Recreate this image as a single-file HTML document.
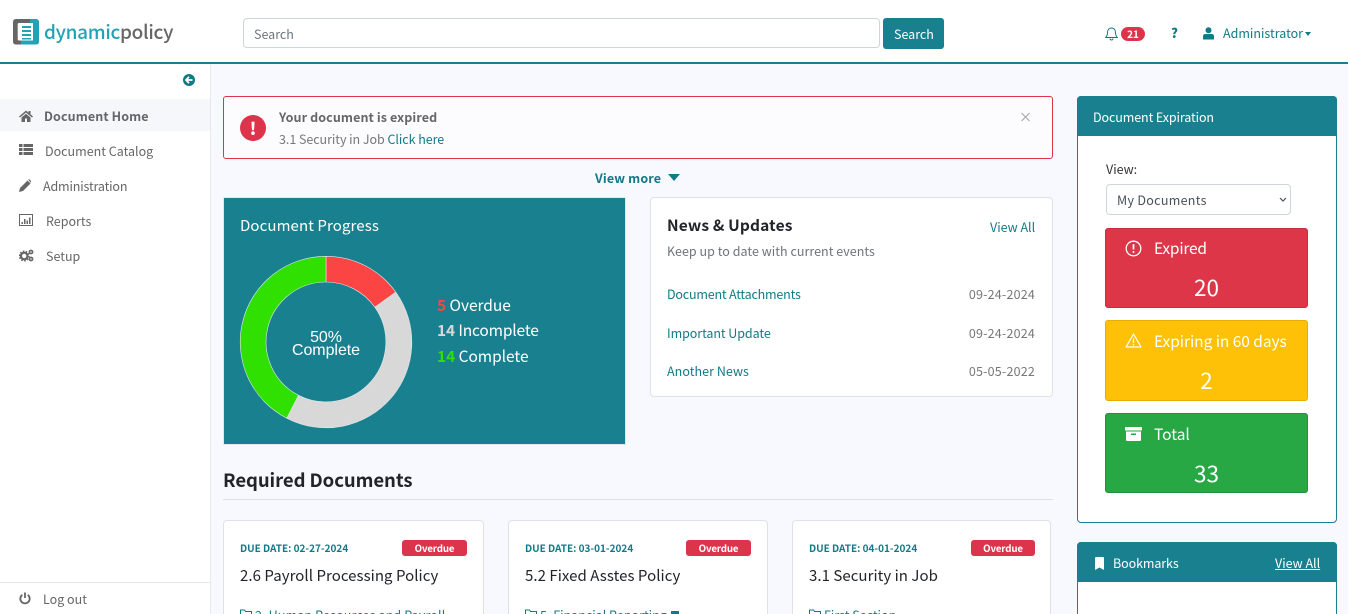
<!DOCTYPE html>
<html><head><meta charset="utf-8"><title>Dynamic Policy</title>
<style>
*{box-sizing:border-box}
html,body{margin:0;padding:0;width:1348px;height:614px;overflow:hidden;background:#f8f9fe}
body{position:relative;font-family:"Noto Sans CJK JP","Liberation Sans",sans-serif;font-size:12.5px;color:#666;letter-spacing:0}
.t{position:absolute;white-space:nowrap;line-height:20px}
.b{position:absolute}
.teal{color:#117a85}
svg{position:absolute;display:block}
.card{position:absolute;background:#fff;border:1px solid #dfe1e8;border-radius:4px}
.tile{position:absolute;left:1105px;width:203px;height:80px;border-radius:3px;color:#fff}
.badge{position:absolute;background:#dc354b;color:#fff;font-size:9.7px;letter-spacing:-.15px;font-weight:700;text-align:center;height:16px;line-height:16px;border-radius:3px;top:540px}
.due{font-size:10px;font-weight:700;color:#117a85;top:538px}
.ttl{font-size:15px;letter-spacing:.05px;color:#212529;top:566px}
</style></head><body>

<div class="b" style="left:0;top:0;width:1348px;height:62px;background:#fff"></div>
<div class="b" style="left:0;top:62px;width:1348px;height:2px;background:#19808f"></div>
<div class="b" style="left:0;top:64px;width:211px;height:550px;background:#fff;border-right:1px solid #e6e8ee"></div>

<svg style="left:13px;top:19px" width="27" height="26" viewBox="0 0 27 26">
<path d="M3 0H17V4H6Q4.700 4 4.700 5.500V20Q4.700 21.500 6 21.500H10V25.500H3Q0 25.500 0 22.500V3Q0 0 3 0Z" fill="#666"/>
<path d="M17 0H23Q26 0 26 3V22.500Q26 25.500 23 25.500H8V21.500H20V4H17Z" fill="#22a3b5"/>
<path d="M9 7H18V9H9ZM9 11H18V13H9ZM9 15H18V17H9ZM9 19H18V20.500H9Z" fill="#22a3b5"/>
</svg>
<div class="t" style="left:44px;top:19px;font-size:19px;line-height:26px;letter-spacing:-.33px;color:#22a3b5;font-weight:500">dynamic<span style="color:#666">policy</span></div>

<div class="b" style="left:243px;top:18px;width:637px;height:30px;background:#fff;border:1px solid #ced4da;border-radius:4px"></div>
<div class="t" style="left:254px;top:24px;color:#6c757d">Search</div>
<div class="b" style="left:883px;top:18px;width:61px;height:31px;background:#19808f;border-radius:3px"></div>
<div class="t" style="left:894px;top:24px;color:#fff">Search</div>

<svg style="left:1105px;top:27px" width="13" height="14" viewBox="0 0 13 14"><path d="M6.500 1C4 1 2.500 3 2.500 5.500C2.500 8.500 1.500 9.500 .7 10.500H12.300C11.500 9.500 10.500 8.500 10.500 5.500C10.500 3 9 1 6.500 1ZM5 11.500C5 13.500 8 13.500 8 11.500" fill="none" stroke="#117a85" stroke-width="1"/></svg>
<div class="b" style="left:1121px;top:27px;width:24px;height:14px;background:#dc354b;border-radius:7px;color:#fff;font-size:10px;font-weight:700;line-height:14px;text-align:center">21</div>
<div class="t" style="left:1171px;top:23px;font-weight:900;color:#117a85;font-size:13px">?</div>
<svg style="left:1203px;top:27px" width="11" height="13" viewBox="0 0 11 13"><circle cx="5.500" cy="3.200" r="3" fill="#117a85"/><path d="M0 12.500V9.500Q0 7 2.500 7H8.500Q11 7 11 9.500V12.500Z" fill="#117a85"/></svg>
<div class="t teal" style="left:1223px;top:23px">Administrator</div>
<div class="b" style="left:1305px;top:32px;border:3.500px solid transparent;border-top:4px solid #117a85;border-bottom:0"></div>

<svg style="left:183px;top:74px" width="12" height="12" viewBox="0 0 12 12"><circle cx="6" cy="6" r="6" fill="#117a85"/><path d="M6 2.800L3 6L6 9.200M3.500 6H9.500" fill="none" stroke="#fff" stroke-width="1.700"/></svg>

<div class="b" style="left:0;top:99px;width:210px;height:32px;background:#f5f7fb"></div>
<svg style="left:19px;top:110px" width="14" height="12" viewBox="0 0 14 12"><path d="M7 .5L0 6.500L1 7.500L7 2.500L13 7.500L14 6.500L11.500 4.300V1H9.500V2.600ZM2.500 7.500V12H6V8.500H8V12H11.500V7.500L7 3.800Z" fill="#666"/></svg>
<div class="t" style="left:44px;top:106px;font-weight:700;color:#666;letter-spacing:.1px">Document Home</div>
<svg style="left:19px;top:144px" width="14" height="11" viewBox="0 0 14 11"><path d="M0 0H3.500V3H0ZM4.500 0H14V3H4.500ZM0 4H3.500V7H0ZM4.500 4H14V7H4.500ZM0 8H3.500V11H0ZM4.500 8H14V11H4.500Z" fill="#666"/></svg>
<div class="t" style="left:45px;top:141px">Document Catalog</div>
<svg style="left:19px;top:179px" width="12" height="13" viewBox="0 0 12 13"><path d="M0 13L1 9L8.500 1.500L11.500 4.500L4 12ZM9.300 .8L10 0L12 2L12 3.500L11.800 3.800Z" fill="#666"/></svg>
<div class="t" style="left:43px;top:176px;letter-spacing:-.15px">Administration</div>
<svg style="left:19px;top:214px" width="14" height="12" viewBox="0 0 14 12"><path d="M.5 .5H13.500V11.500H.5Z" fill="none" stroke="#666"/><path d="M2.500 8H4V10H2.500ZM5 5H6.500V10H5ZM7.500 6.500H9V10H7.500ZM10 3.500H11.500V10H10Z" fill="#666"/></svg>
<div class="t" style="left:46px;top:211px">Reports</div>
<svg style="left:19px;top:249px" width="15" height="13" viewBox="0 0 15 13"><circle cx="5.200" cy="7" r="3.300" fill="none" stroke="#666" stroke-width="2.200"/><circle cx="5.200" cy="7" r="4.800" fill="none" stroke="#666" stroke-width="1.400" stroke-dasharray="1.600 1.400"/><circle cx="12" cy="3" r="1.600" fill="none" stroke="#666" stroke-width="1.600"/><circle cx="12" cy="10" r="1.600" fill="none" stroke="#666" stroke-width="1.600"/></svg>
<div class="t" style="left:46px;top:246px">Setup</div>
<div class="b" style="left:0;top:582px;width:210px;height:1px;background:#e6e8ee"></div>
<svg style="left:19px;top:592px" width="12" height="13" viewBox="0 0 12 13"><path d="M3.300 2.800A4.700 4.700 0 1 0 8.700 2.800" fill="none" stroke="#666" stroke-width="1.800"/><path d="M6 .5V6" stroke="#666" stroke-width="1.800"/></svg>
<div class="t" style="left:43px;top:589px">Log out</div>

<div class="b" style="left:223px;top:96px;width:830px;height:63px;background:#fcfcff;border:1px solid #dc354b;border-radius:3px"></div>
<div class="b" style="left:240px;top:115px;width:26px;height:26px;border-radius:50%;background:#dc354b;color:#fff;font-weight:900;font-size:17px;line-height:26px;text-align:center;letter-spacing:0">!</div>
<div class="t" style="left:279px;top:107px;font-weight:700;color:#666;letter-spacing:.1px">Your document is expired</div>
<div class="t" style="left:279px;top:129px;color:#777;letter-spacing:-.05px">3.1 Security in Job <span class="teal">Click here</span></div>
<svg style="left:1021px;top:112px" width="9" height="10" viewBox="0 0 9 10"><path d="M.5 1L8.500 9M8.500 1L.5 9" stroke="#a9abb0" stroke-width="1.200"/></svg>

<div class="t teal" style="left:595px;top:168px;font-weight:700;letter-spacing:.15px">View more</div>
<div class="b" style="left:668px;top:174px;border:6px solid transparent;border-top:7px solid #117a85;border-bottom:0"></div>

<div class="b" style="left:223px;top:197px;width:403px;height:248px;background:#19808f;border:1px solid #e4e6ec"></div>
<div class="t" style="left:240px;top:216px;color:#fff;font-size:15px;letter-spacing:.1px">Document Progress</div>
<svg style="left:238px;top:254px" width="176" height="176" viewBox="238 254 176 176">
<path d="M326 256.300A85.700 85.700 0 0 1 395.800 292.200L374.800 307.200A60 60 0 0 0 326 282Z" fill="#fb4444" stroke="#dfe8ea" stroke-width=".6"/>
<path d="M395.800 292.200A85.700 85.700 0 0 1 286.700 418.200L298.500 395.300A60 60 0 0 0 374.800 307.200Z" fill="#d8d8d8" stroke="#dfe8ea" stroke-width=".6"/>
<path d="M286.700 418.200A85.700 85.700 0 0 1 326 256.300V282A60 60 0 0 0 298.500 395.300Z" fill="#2fe000" stroke="#dfe8ea" stroke-width=".6"/>
</svg>
<div class="t" style="left:266px;top:331px;width:120px;text-align:center;color:#fff;font-family:'Liberation Sans',sans-serif;font-size:16px;line-height:13px;letter-spacing:-.05px">50%<br>Complete</div>
<div class="t" style="left:437px;top:295px;color:#fff;font-size:15.500px;letter-spacing:-.05px"><b style="color:#fb4444">5</b> Overdue</div>
<div class="t" style="left:437px;top:320px;color:#fff;font-size:15.500px;letter-spacing:-.15px"><b style="color:#d8d8d8">14</b> Incomplete</div>
<div class="t" style="left:437px;top:346px;color:#fff;font-size:15.500px;letter-spacing:-.05px"><b style="color:#2fe000">14</b> Complete</div>

<div class="card" style="left:650px;top:197px;width:403px;height:200px"></div>
<div class="t" style="left:667px;top:215px;font-size:15.500px;font-weight:700;color:#212529;letter-spacing:.15px">News &amp; Updates</div>
<div class="t teal" style="left:990px;top:217px">View All</div>
<div class="t" style="left:667px;top:241px;color:#6c757d;letter-spacing:.03px">Keep up to date with current events</div>
<div class="t teal" style="left:667px;top:284px;letter-spacing:-.2px">Document Attachments</div>
<div class="t" style="right:313px;top:284px;color:#777;letter-spacing:.2px">09-24-2024</div>
<div class="t teal" style="left:667px;top:323px;letter-spacing:-.07px">Important Update</div>
<div class="t" style="right:313px;top:323px;color:#777;letter-spacing:.2px">09-24-2024</div>
<div class="t teal" style="left:667px;top:361px;letter-spacing:.05px">Another News</div>
<div class="t" style="right:313px;top:361px;color:#777;letter-spacing:.2px">05-05-2022</div>

<div class="t" style="left:223px;top:470px;font-size:18.500px;letter-spacing:-.07px;font-weight:700;color:#212529">Required Documents</div>
<div class="b" style="left:223px;top:499px;width:830px;height:1px;background:#dfe1e8"></div>

<div class="card" style="left:223px;top:520px;width:261px;height:120px"></div>
<div class="t due" style="left:240px">DUE DATE: 02-27-2024</div>
<div class="badge" style="left:402px;width:65px">Overdue</div>
<div class="t ttl" style="left:240px">2.6 Payroll Processing Policy</div>
<svg style="left:240px;top:609px" width="12" height="10" viewBox="0 0 12 10"><path d="M.5 9.500V1H4.500L5.500 2.500H11.500V9.500Z" fill="none" stroke="#117a85"/></svg>
<div class="t teal" style="left:255px;top:605px;letter-spacing:.13px">2. Human Resources and Payroll</div>

<div class="card" style="left:508px;top:520px;width:260px;height:120px"></div>
<div class="t due" style="left:525px">DUE DATE: 03-01-2024</div>
<div class="badge" style="left:686px;width:65px">Overdue</div>
<div class="t ttl" style="left:525px">5.2 Fixed Asstes Policy</div>
<svg style="left:525px;top:609px" width="12" height="10" viewBox="0 0 12 10"><path d="M.5 9.500V1H4.500L5.500 2.500H11.500V9.500Z" fill="none" stroke="#117a85"/></svg>
<div class="t teal" style="left:540px;top:605px">5. Financial Reporting</div>
<div class="b" style="left:671px;top:611px;width:8px;height:4px;background:#117a85"></div>

<div class="card" style="left:792px;top:520px;width:259px;height:120px"></div>
<div class="t due" style="left:809px">DUE DATE: 04-01-2024</div>
<div class="badge" style="left:971px;width:64px">Overdue</div>
<div class="t ttl" style="left:809px">3.1 Security in Job</div>
<svg style="left:809px;top:609px" width="12" height="10" viewBox="0 0 12 10"><path d="M.5 9.500V1H4.500L5.500 2.500H11.500V9.500Z" fill="none" stroke="#117a85"/></svg>
<div class="t teal" style="left:824px;top:605px">First Section</div>

<div class="b" style="left:1077px;top:96px;width:260px;height:427px;background:#fff;border:1px solid #19808f;border-radius:4px"></div>
<div class="b" style="left:1077px;top:96px;width:260px;height:40px;background:#19808f;border-radius:4px 4px 0 0"></div>
<div class="t" style="left:1093px;top:107px;color:#fff;letter-spacing:-.1px">Document Expiration</div>
<div class="t" style="left:1106px;top:159px;color:#333">View:</div>
<div class="b" style="left:1106px;top:184px;width:185px;height:31px;background:#fff;border:1px solid #ced4da;border-radius:4px"></div>
<div class="t" style="left:1117px;top:190px;color:#495057;letter-spacing:.3px">My Documents</div>
<svg style="left:1279px;top:197px" width="8" height="6" viewBox="0 0 8 6"><path d="M1 1L4 4L7 1" fill="none" stroke="#495057" stroke-width="1.200"/></svg>

<div class="tile" style="top:228px;background:#dc3648;border:1px solid #c9303f"></div>
<svg style="left:1125px;top:240px" width="17" height="17" viewBox="0 0 17 17"><circle cx="8.500" cy="8.500" r="7.300" fill="none" stroke="#fff" stroke-width="1.300"/><path d="M8.500 4.200V9.500" stroke="#fff" stroke-width="1.700"/><circle cx="8.500" cy="12" r="1" fill="#fff"/></svg>
<div class="t" style="left:1154px;top:238px;color:#fff;font-size:15.500px;letter-spacing:-.2px">Expired</div>
<div class="t" style="left:1105px;width:203px;top:277px;text-align:center;color:#fff;font-size:22.500px">20</div>

<div class="tile" style="top:320px;height:81px;background:#ffc107;border:1px solid #e5ad06"></div>
<svg style="left:1125px;top:333px" width="17" height="15" viewBox="0 0 17 15"><path d="M8.500 1L16 14H1Z" fill="none" stroke="#fff" stroke-width="1.200" stroke-linejoin="round"/><path d="M8.500 5V10" stroke="#fff" stroke-width="1.300"/><circle cx="8.500" cy="11.800" r=".8" fill="#fff"/></svg>
<div class="t" style="left:1154px;top:331px;color:#fff;font-size:15.500px;letter-spacing:-.05px">Expiring in 60 days</div>
<div class="t" style="left:1105px;width:203px;top:370px;text-align:center;color:#fff;font-size:22.500px">2</div>

<div class="tile" style="top:413px;background:#28a745;border:1px solid #23913c"></div>
<svg style="left:1125px;top:427px" width="17" height="14" viewBox="0 0 17 14"><path d="M0 0H17V3.500H0ZM1 4.500H16V13Q16 14 15 14H2Q1 14 1 13ZM6 6.500V8H11V6.500Z" fill="#fff" fill-rule="evenodd"/></svg>
<div class="t" style="left:1154px;top:424px;color:#fff;font-size:15.500px">Total</div>
<div class="t" style="left:1105px;width:203px;top:463px;text-align:center;color:#fff;font-size:22.500px">33</div>

<div class="b" style="left:1077px;top:542px;width:260px;height:90px;background:#fff;border:1px solid #19808f;border-radius:4px"></div>
<div class="b" style="left:1077px;top:542px;width:260px;height:40px;background:#19808f;border-radius:4px 4px 0 0"></div>
<svg style="left:1095px;top:557px" width="9" height="13" viewBox="0 0 9 13"><path d="M1 0H8Q9 0 9 1V13L4.500 10.500L0 13V1Q0 0 1 0Z" fill="#fff"/></svg>
<div class="t" style="left:1113px;top:553px;color:#fff;letter-spacing:-.1px">Bookmarks</div>
<div class="t" style="left:1275px;top:553px;color:#fff;text-decoration:underline">View All</div>
</body></html>
